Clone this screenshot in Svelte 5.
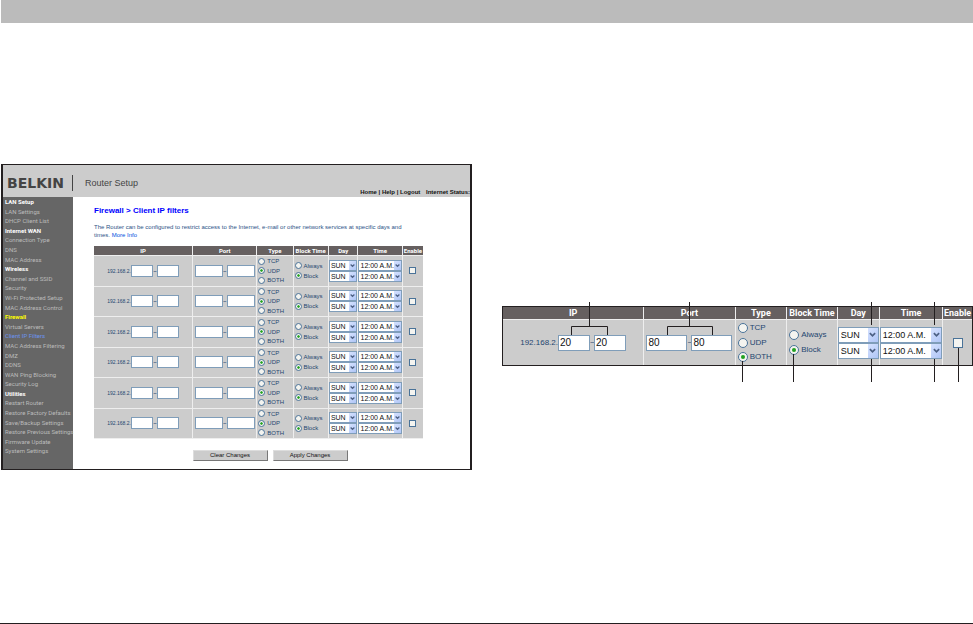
<script lang="ts">
	type Filter = {
		ipFrom: string;
		ipTo: string;
		portFrom: string;
		portTo: string;
		type: string;
		block: string;
		enabled: boolean;
	};

	const menu = [
		{ title: 'LAN Setup', items: ['LAN Settings', 'DHCP Client List'] },
		{ title: 'Internet WAN', items: ['Connection Type', 'DNS', 'MAC Address'] },
		{
			title: 'Wireless',
			items: ['Channel and SSID', 'Security', 'Wi-Fi Protected Setup', 'MAC Address Control']
		},
		{
			title: 'Firewall',
			items: [
				'Virtual Servers',
				'Client IP Filters',
				'MAC Address Filtering',
				'DMZ',
				'DDNS',
				'WAN Ping Blocking',
				'Security Log'
			]
		},
		{
			title: 'Utilities',
			items: [
				'Restart Router',
				'Restore Factory Defaults',
				'Save/Backup Settings',
				'Restore Previous Settings',
				'Firmware Update',
				'System Settings'
			]
		}
	];

	const types = ['TCP', 'UDP', 'BOTH'];
	const blocks = ['Always', 'Block'];

	function emptyFilter(): Filter {
		return {
			ipFrom: '',
			ipTo: '',
			portFrom: '',
			portTo: '',
			type: 'UDP',
			block: 'Block',
			enabled: false
		};
	}

	let filters = $state(Array.from({ length: 6 }, emptyFilter));
	let sample = $state([
		{ ...emptyFilter(), ipFrom: '20', ipTo: '20', portFrom: '80', portTo: '80', type: 'BOTH' }
	]);

	function clearChanges() {
		filters = Array.from({ length: 6 }, emptyFilter);
	}
</script>

{#snippet picker(label: string, value: string)}
	<span class="picker">
		<select aria-label={label}>
			<option>{value}</option>
		</select>
		<span class="arrow">
			<svg viewBox="0 0 8 8" aria-hidden="true"><path d="M1 2.5 4 5.5 7 2.5" /></svg>
		</span>
	</span>
{/snippet}

{#snippet filterTable(rows: Filter[], name: string)}
	<table class={name}>
		<colgroup>
			<col class="ip" />
			<col class="port" />
			<col class="type" />
			<col class="block" />
			<col class="day" />
			<col class="time" />
			<col class="enable" />
		</colgroup>
		<thead>
			<tr>
				<th>IP</th>
				<th>Port</th>
				<th>Type</th>
				<th>Block Time</th>
				<th>Day</th>
				<th>Time</th>
				<th>Enable</th>
			</tr>
		</thead>
		<tbody>
			{#each rows as row, i}
				<tr>
					<td>
						<div class="range">
							<span class="prefix">192.168.2.</span>
							<input type="text" aria-label="First IP" bind:value={row.ipFrom} />
							<span class="tilde">~</span>
							<input type="text" aria-label="Last IP" bind:value={row.ipTo} />
						</div>
					</td>
					<td>
						<div class="range ports">
							<input type="text" aria-label="First port" bind:value={row.portFrom} />
							<span class="tilde">~</span>
							<input type="text" aria-label="Last port" bind:value={row.portTo} />
						</div>
					</td>
					<td>
						<div class="choices types">
							{#each types as type}
								<label>
									<input type="radio" name="{name}-type-{i}" value={type} bind:group={row.type} />
									{type}
								</label>
							{/each}
						</div>
					</td>
					<td>
						<div class="choices blocks">
							{#each blocks as block}
								<label>
									<input type="radio" name="{name}-block-{i}" value={block} bind:group={row.block} />
									{block}
								</label>
							{/each}
						</div>
					</td>
					<td>
						{@render picker('From day', 'SUN')}
						{@render picker('To day', 'SUN')}
					</td>
					<td>
						{@render picker('From time', '12:00 A.M.')}
						{@render picker('To time', '12:00 A.M.')}
					</td>
					<td>
						<input type="checkbox" aria-label="Enable" bind:checked={row.enabled} />
					</td>
				</tr>
			{/each}
		</tbody>
	</table>
{/snippet}

<div class="page">
	<div class="strip"></div>

	<main>
		<section class="router">
			<header>
				<span class="logo">BELKIN</span>
				<span class="product">Router Setup</span>
				<nav class="links">
					<a href="#home">Home</a> | <a href="#help">Help</a> | <a href="#logout">Logout</a>
					<span class="status">Internet Status:</span>
				</nav>
			</header>

			<div class="body">
				<nav class="menu">
					{#each menu as group}
						<strong class:current={group.title === 'Firewall'}>{group.title}</strong>
						{#each group.items as item}
							<a href="#menu" class:current={item === 'Client IP Filters'}>{item}</a>
						{/each}
					{/each}
				</nav>

				<div class="content">
					<h1>Firewall &gt; Client IP filters</h1>
					<p>
						The Router can be configured to restrict access to the Internet, e-mail or other network
						services at specific days and times. <a href="#info">More Info</a>
					</p>
					{@render filterTable(filters, 'small')}
					<div class="buttons">
						<button type="button" onclick={clearChanges}>Clear Changes</button>
						<button type="button">Apply Changes</button>
					</div>
				</div>
			</div>
		</section>

		<section class="detail">
			{@render filterTable(sample, 'large')}
			<svg class="callouts" viewBox="0 0 471 80" preserveAspectRatio="none" aria-hidden="true">
				<path d="M87.5 0V24M69.5 33V24.5H105.5V33" />
				<path d="M187.5 0V24M165.5 33V24.5H210.5V33" />
				<path d="M369.5 0V23M432.5 0V23" />
				<path d="M240.5 59V80M291.5 52V80M369.5 57V80M432.5 57V80M456.5 46V80" />
			</svg>
		</section>
	</main>
</div>

<style>
	:global(body) {
		margin: 0;
		background: #fff;
	}

	.page {
		box-sizing: border-box;
		display: flex;
		flex-direction: column;
		min-height: 100vh;
		border-bottom: 1px solid #231f20;
		font-family: 'Liberation Sans', Arial, sans-serif;
	}

	.strip {
		height: 23px;
		margin-left: 1px;
		background: #bbb;
	}

	main {
		display: grid;
		grid-template-columns: 1fr 1fr;
		align-items: start;
		gap: 30px;
		padding: 141px 0 40px 1px;
	}

	a {
		color: inherit;
		text-decoration: none;
	}

	.router {
		min-width: 0;
		border: 1px solid #231f20;
		border-width: 1px 2px;
	}

	header {
		box-sizing: border-box;
		display: flex;
		align-items: center;
		height: 32px;
		padding: 3px 0 0 4px;
		background: #ccc;
	}

	.logo {
		padding-right: 8px;
		border-right: 1px solid #444;
		font: bold 14px/16px 'DejaVu Sans', sans-serif;
		color: #444;
	}

	.product {
		padding-left: 12px;
		font-size: 9px;
		color: #444;
	}

	.links {
		align-self: flex-end;
		margin-left: auto;
		font-size: 6px;
		font-weight: bold;
		line-height: 9px;
		white-space: nowrap;
		color: #111;
	}

	.status {
		margin-left: 4px;
	}

	.body {
		display: flex;
	}

	.menu {
		box-sizing: border-box;
		display: flex;
		flex: none;
		flex-direction: column;
		width: 70px;
		padding: 0 0 13px 2px;
		background: #666;
		font-family: Roboto, sans-serif;
		font-size: 6px;
		line-height: 9px;
		white-space: nowrap;
		color: #bbb;
	}

	.menu > * {
		flex: 1;
	}

	.menu strong {
		color: #fff;
	}

	.menu strong.current {
		color: #ff0;
	}

	.menu a.current {
		color: #6b93ee;
	}

	.content {
		flex: 1;
		min-width: 0;
		padding: 9px 47px 8px 21px;
	}

	h1 {
		margin: 0 0 7px;
		font-size: 8px;
		line-height: 10px;
		color: #00f;
	}

	p {
		margin: 0 0 7px;
		padding-right: 8px;
		font-size: 6px;
		line-height: 8px;
		color: #2c5286;
	}

	p a {
		color: #0050e0;
	}

	table {
		width: 100%;
		table-layout: fixed;
		border-collapse: collapse;
		color: #24466f;
	}

	.ip {
		width: 30%;
	}

	.port {
		width: 19.5%;
	}

	.type {
		width: 11%;
	}

	.block {
		width: 10.75%;
	}

	.day {
		width: 9%;
	}

	.time {
		width: 13.5%;
	}

	.enable {
		width: 6.25%;
	}

	th,
	td {
		padding: 0;
		border-right: 1px solid #eee;
		border-bottom: 1px solid #eee;
	}

	th:last-child,
	td:last-child {
		border-right: 0;
	}

	th {
		background: #666060;
		font-family: Roboto, sans-serif;
		color: #fff;
		white-space: nowrap;
	}

	td {
		background: #ccc;
	}

	.range {
		display: flex;
		align-items: center;
		justify-content: center;
	}

	.tilde {
		width: 4px;
		text-align: center;
	}

	input,
	select {
		box-sizing: border-box;
		margin: 0;
		border: 1px solid #7f9db9;
		border-radius: 0;
		appearance: none;
		background: #fff;
		font-family: inherit;
		color: #111;
	}

	.choices {
		display: flex;
		flex-direction: column;
	}

	label {
		display: flex;
		flex: 1;
		align-items: center;
	}

	input[type='radio'] {
		flex: none;
		border-color: #4a7399;
		border-radius: 50%;
		background: #f4f4f0;
	}

	input[type='radio']:checked {
		background: radial-gradient(circle, #21a121 25%, #f4f4f0 45%);
	}

	input[type='checkbox'] {
		display: block;
		margin: 0 auto;
		border-color: #4a7399;
		background: #f4f4f0;
	}

	input[type='checkbox']:checked {
		background: #21a121;
	}

	.picker {
		position: relative;
		display: block;
	}

	select {
		display: block;
		width: 100%;
	}

	.arrow {
		position: absolute;
		top: 1px;
		right: 1px;
		bottom: 1px;
		display: flex;
		align-items: center;
		justify-content: center;
		background: linear-gradient(135deg, #d6e2ff, #afc5f6);
		pointer-events: none;
	}

	.arrow svg {
		fill: none;
		stroke: #4d6185;
		stroke-width: 2;
	}

	/* six-row table on the setup page */
	.small {
		height: 193px;
		font-size: 6px;
		line-height: 8px;
	}

	.small th {
		height: 9px;
	}

	.small .prefix {
		font-size: 5px;
	}

	.small input[type='text'] {
		width: 22px;
		height: 12px;
		padding: 0 1px;
		font-size: 6px;
	}

	.small .ports input[type='text'] {
		width: 28px;
	}

	.small .types {
		height: 29px;
	}

	.small .blocks {
		height: 20px;
	}

	.small label {
		gap: 2px;
		padding-left: 1px;
	}

	.small input[type='radio'],
	.small input[type='checkbox'] {
		width: 7px;
		height: 7px;
	}

	.small select {
		height: 11px;
		padding: 0 0 0 1px;
		font-size: 7px;
	}

	.small .arrow {
		width: 7px;
	}

	.small .arrow svg {
		width: 5px;
		height: 5px;
	}

	.buttons {
		display: flex;
		justify-content: center;
		gap: 5px;
		margin-top: 11px;
		padding-left: 23px;
	}

	button {
		width: 75px;
		height: 11px;
		padding: 0;
		border: 1px solid;
		border-color: #ddd #777 #777 #ddd;
		background: #ccc;
		font-family: inherit;
		font-size: 6px;
		line-height: 9px;
		color: #111;
	}

	/* enlarged row with callout lines */
	.detail {
		position: relative;
		min-width: 0;
		margin-top: 142px;
		border: 1px solid #231f20;
	}

	.large {
		font-size: 8px;
		line-height: 12px;
	}

	.large th {
		height: 12px;
		font-size: 9px;
	}

	.large td {
		height: 45px;
		border-bottom: 0;
	}

	.large input[type='text'] {
		width: 32px;
		height: 16px;
		padding: 0 1px;
		font-size: 10px;
	}

	.large .ports input[type='text'] {
		width: 41px;
	}

	.large .types {
		height: 44px;
	}

	.large .blocks {
		height: 30px;
	}

	.large label {
		gap: 2px;
		padding-left: 2px;
	}

	.large input[type='radio'],
	.large input[type='checkbox'] {
		width: 10px;
		height: 10px;
	}

	.large select {
		height: 16px;
		padding: 0 0 0 2px;
		font-size: 9px;
	}

	.large .arrow {
		width: 10px;
	}

	.large .arrow svg {
		width: 7px;
		height: 7px;
	}

	.callouts {
		position: absolute;
		top: -5px;
		left: -1px;
		width: calc(100% + 2px);
		height: 80px;
		fill: none;
		stroke: #231f20;
		stroke-width: 1;
		pointer-events: none;
	}
</style>
